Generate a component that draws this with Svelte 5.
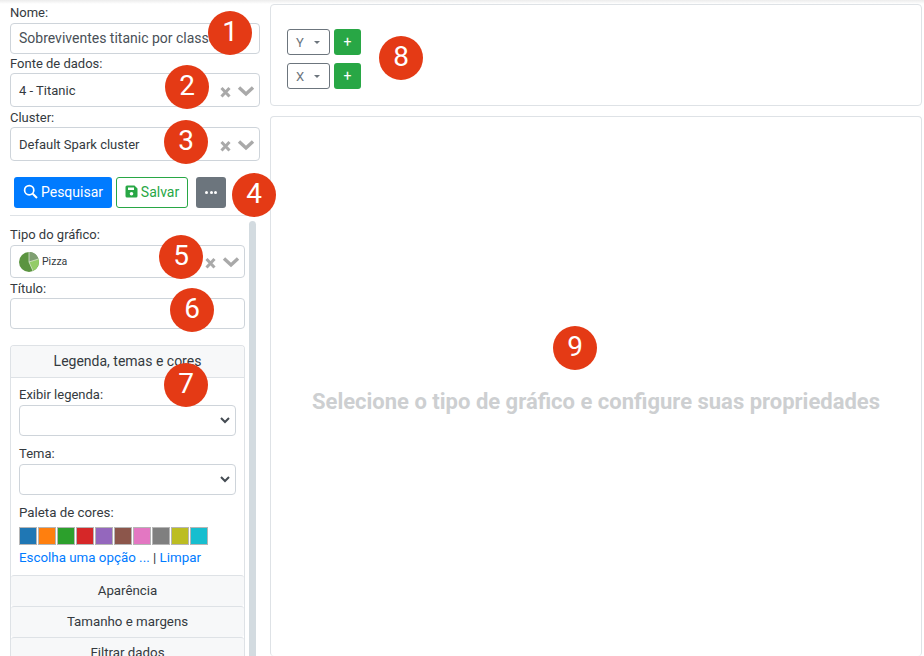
<script>
  const palette = ['#1f77b4', '#ff7f0e', '#2ca02c', '#d62728', '#9467bd', '#8c564b', '#e377c2', '#7f7f7f', '#bcbd22', '#17becf'];
  const axes = ['Y', 'X'];
  const closed = ['Aparência', 'Tamanho e margens', 'Filtrar dados'];
</script>

{#snippet clearChevron()}
  <svg class="sel-icons" width="36" height="14" viewBox="0 0 36 14">
    <path d="M2.500 3 L10.500 11.500 M10.500 3 L2.500 11.500" stroke="#a9a9a9" stroke-width="3" fill="none" />
    <path d="M20 2.500 L27 9 L34 2.500" stroke="#a9a9a9" stroke-width="3.400" fill="none" />
  </svg>
{/snippet}

{#snippet nativeSelect()}
  <div class="native">
    <svg width="10" height="7" viewBox="0 0 10 7"><path d="M1 1 L5 5 L9 1" stroke="#444b52" stroke-width="2" fill="none" /></svg>
  </div>
{/snippet}

<div class="page">
  <aside class="side">
    <div class="top-form">
      <div class="lbl first">Nome:</div>
      <div class="input name">Sobreviventes titanic por classe</div>
      <div class="lbl">Fonte de dados:</div>
      <div class="select s34"><span>4 - Titanic</span>{@render clearChevron()}</div>
      <div class="lbl cluster">Cluster:</div>
      <div class="select s34"><span>Default Spark cluster</span>{@render clearChevron()}</div>
      <div class="actions">
        <button class="btn primary">
          <svg width="15" height="15" viewBox="0 0 15 15"><circle cx="6.200" cy="6.200" r="4.600" fill="none" stroke="#fff" stroke-width="1.700" /><path d="M9.700 9.700 L14 14" stroke="#fff" stroke-width="2" /></svg>
          Pesquisar
        </button>
        <button class="btn outline">
          <svg width="13" height="13" viewBox="0 0 13 13"><path fill-rule="evenodd" fill="#28a745" d="M2 .5h7.500L12.500 3.500V11a1.500 1.500 0 0 1-1.500 1.500H2A1.500 1.500 0 0 1 .5 11V2A1.500 1.500 0 0 1 2 .5zM3 2.500V5h6V2.500zM6.500 7a1.800 1.800 0 1 0 0 3.600 1.800 1.800 0 0 0 0-3.600z" /></svg>
          Salvar
        </button>
        <button class="btn more"><span></span><span></span><span></span></button>
      </div>
    </div>

    <div class="scroll-area">
      <div class="scroll-content">
        <div class="lbl tipo">Tipo do gráfico:</div>
        <div class="select s33 chart-type">
          <span class="pizza">
            <svg width="20" height="20" viewBox="0 0 20 20">
              <circle cx="10" cy="10" r="10" fill="#5b9440" />
              <path d="M10 10 L10 0 A10 10 0 0 1 19.500 7 Z" fill="#7f9f72" />
              <path d="M10 10 L19.500 7 A10 10 0 0 1 14 19 Z" fill="#93cc68" />
              <path d="M10 10 L10 0 M10 10 L19.500 7 M10 10 L14 19" stroke="#e6efe0" stroke-width="0.700" />
            </svg>
            Pizza
          </span>
          {@render clearChevron()}
        </div>
        <div class="lbl cluster">Título:</div>
        <div class="input title"></div>

        <div class="accordion">
          <div class="acc-head open">Legenda, temas e cores</div>
          <div class="acc-body">
            <div class="lbl inner">Exibir legenda:</div>
            {@render nativeSelect()}
            <div class="lbl inner tema">Tema:</div>
            {@render nativeSelect()}
            <div class="lbl inner paleta">Paleta de cores:</div>
            <div class="swatches">
              {#each palette as c}
                <span class="swatch" style="background: {c}"></span>
              {/each}
            </div>
            <div class="links"><a href="#a">Escolha uma opção ...</a> | <a href="#a">Limpar</a></div>
          </div>
          {#each closed as item}
            <div class="acc-head">{item}</div>
          {/each}
        </div>
      </div>
      <div class="scrollbar"></div>
    </div>
  </aside>

  <main class="main">
    <div class="card axes">
      {#each axes as a}
        <div class="axis-row">
          <button class="axis-btn">{a}<i class="caret"></i></button>
          <button class="plus">+</button>
        </div>
      {/each}
    </div>
    <div class="card plot">
      <div class="placeholder">Selecione o tipo de gráfico e configure suas propriedades</div>
    </div>
  </main>

  <!-- numbered annotation markers laid over the screenshot -->
  <span class="pin" style="left: 208px; top: 11px">1</span>
  <span class="pin" style="left: 165px; top: 65px">2</span>
  <span class="pin" style="left: 164px; top: 120px">3</span>
  <span class="pin" style="left: 232px; top: 173px">4</span>
  <span class="pin" style="left: 159px; top: 235px">5</span>
  <span class="pin" style="left: 170px; top: 288px">6</span>
  <span class="pin" style="left: 164px; top: 363px">7</span>
  <span class="pin" style="left: 379px; top: 36px">8</span>
  <span class="pin" style="left: 553px; top: 326px">9</span>
</div>

<style>
  :global(body) {
    margin: 0;
    background: #fff;
    overflow: hidden;
  }
  .page {
    position: relative;
    width: 924px;
    height: 656px;
    overflow: hidden;
    display: flex;
    font-family: Roboto, "Liberation Sans", sans-serif;
    font-size: 13px;
    color: #343a40;
    box-sizing: border-box;
    padding-right: 2px;
  }
  .page::before {
    content: '';
    position: absolute;
    inset: 0 0 auto 0;
    height: 4px;
    background: linear-gradient(#ececec, #fff);
  }
  .side {
    width: 270px;
    flex: none;
    padding-left: 10px;
    box-sizing: border-box;
  }
  .top-form {
    width: 250px;
  }
  .lbl {
    line-height: 16px;
    height: 16px;
    margin-top: 2px;
    margin-bottom: 1px;
  }
  .lbl.first {
    margin-top: 5px;
    margin-bottom: 2px;
  }
  .lbl.cluster {
    margin-top: 3px;
  }
  .input,
  .select,
  .native {
    box-sizing: border-box;
    background: #fff;
    border: 1px solid #ced4da;
    border-radius: 4px;
  }
  .input {
    height: 31px;
  }
  .name {
    padding: 0 8px;
    line-height: 29px;
    font-size: 14px;
    color: #495057;
    white-space: nowrap;
    overflow: hidden;
  }
  .select {
    display: flex;
    align-items: center;
    justify-content: space-between;
    padding: 0 4px 0 8px;
    font-size: 13px;
  }
  .s34 {
    height: 34px;
  }
  .s33 {
    height: 33px;
  }
  .sel-icons {
    flex: none;
    margin-top: 3px;
  }
  .actions {
    display: flex;
    align-items: center;
    padding-left: 4px;
    margin-top: 16px;
    height: 31px;
    padding-bottom: 7px;
    border-bottom: 1px solid #dee2e6;
  }
  .btn {
    box-sizing: border-box;
    height: 31px;
    border-radius: 3px;
    font: inherit;
    font-size: 14px;
    display: flex;
    align-items: center;
    justify-content: center;
    gap: 3px;
    padding: 0 0 2px;
    border: 1px solid transparent;
  }
  .primary {
    width: 98px;
    background: #007bff;
    color: #fff;
  }
  .outline {
    width: 72px;
    margin-left: 4px;
    background: #fff;
    border-color: #28a745;
    color: #28a745;
  }
  .more {
    width: 30px;
    margin-left: 8px;
    background: #6c757d;
    gap: 1.500px;
    padding: 0;
  }
  .more span {
    width: 3px;
    height: 3px;
    border-radius: 50%;
    background: #fff;
  }
  .scroll-area {
    display: flex;
    width: 246px;
    gap: 4px;
    position: relative;
  }
  .scroll-content {
    width: 235px;
    flex: none;
    padding-top: 9px;
  }
  .scrollbar {
    position: absolute;
    left: 239px;
    top: 5px;
    width: 7px;
    height: 500px;
    background: #d3dbe0;
    border-radius: 4px 4px 0 0;
  }
  .tipo {
    margin-bottom: 2px;
  }
  .chart-type {
    padding-left: 8px;
  }
  .pizza {
    display: flex;
    align-items: center;
    gap: 3px;
    font-size: 10.500px;
  }
  .title {
    height: 31px;
  }
  .accordion {
    margin-top: 16px;
    border: 1px solid #dee2e6;
    border-radius: 4px 4px 0 0;
    border-bottom: 0;
  }
  .acc-head {
    height: 30px;
    line-height: 30px;
    text-align: center;
    background: #f7f8f9;
    border-top: 1px solid #dee2e6;
    border-radius: 3px;
    font-size: 13.300px;
  }
  .acc-head.open {
    height: 31px;
    line-height: 31px;
    border-top: 0;
    border-bottom: 1px solid #dee2e6;
    border-radius: 3px 3px 0 0;
    font-size: 14px;
  }
  .acc-body {
    padding: 9px 8px 9px 8px;
  }
  .lbl.inner {
    margin-top: 0;
    margin-bottom: 2px;
  }
  .lbl.tema {
    margin-top: 10px;
  }
  .lbl.paleta {
    margin-top: 10px;
    font-size: 13.300px;
  }
  .native {
    height: 31px;
    display: flex;
    align-items: center;
    justify-content: flex-end;
    padding-right: 5px;
  }
  .swatches {
    display: flex;
    gap: 1px;
    margin-top: 6px;
  }
  .swatch {
    box-sizing: border-box;
    width: 18px;
    height: 18px;
    border: 1px solid #b5b5b5;
  }
  .links {
    margin-top: 4px;
    line-height: 17px;
    font-size: 13.350px;
  }
  .links a {
    color: #007bff;
    text-decoration: none;
  }
  .main {
    flex: 1;
    min-width: 0;
    display: flex;
    flex-direction: column;
    padding-top: 4px;
    gap: 10px;
  }
  .card {
    box-sizing: border-box;
    background: #fff;
    border: 1px solid #dee2e6;
    border-radius: 4px;
  }
  .axes {
    height: 102px;
    padding: 24px 16px 0;
    display: flex;
    flex-direction: column;
    gap: 8px;
  }
  .axis-row {
    display: flex;
    gap: 4px;
  }
  .axis-btn {
    box-sizing: border-box;
    width: 43px;
    height: 26px;
    background: #fff;
    border: 1px solid #6c757d;
    border-radius: 3px;
    font: inherit;
    font-size: 13px;
    color: #6c757d;
    display: flex;
    align-items: center;
    padding: 0 0 0 8px;
    gap: 10px;
  }
  .caret {
    width: 0;
    height: 0;
    border: 3.500px solid transparent;
    border-top-color: #6c757d;
    border-bottom: 0;
  }
  .plus {
    box-sizing: border-box;
    width: 27px;
    height: 26px;
    background: #28a745;
    border: 0;
    border-radius: 3px;
    color: #fff;
    font: inherit;
    font-size: 14px;
    padding: 0;
  }
  .plot {
    flex: 1;
    display: flex;
    justify-content: center;
    padding-top: 272px;
    border-bottom: 0;
  }
  .placeholder {
    font-size: 22px;
    font-weight: 700;
    color: #cdcfd1;
    line-height: 26px;
    white-space: nowrap;
  }
  .pin {
    position: absolute;
    width: 44px;
    height: 42px;
    padding-bottom: 2px;
    border-radius: 50%;
    background: #e43a15;
    color: #fff;
    display: flex;
    align-items: center;
    justify-content: center;
    font-size: 28px;
    line-height: 1;
  }
</style>
